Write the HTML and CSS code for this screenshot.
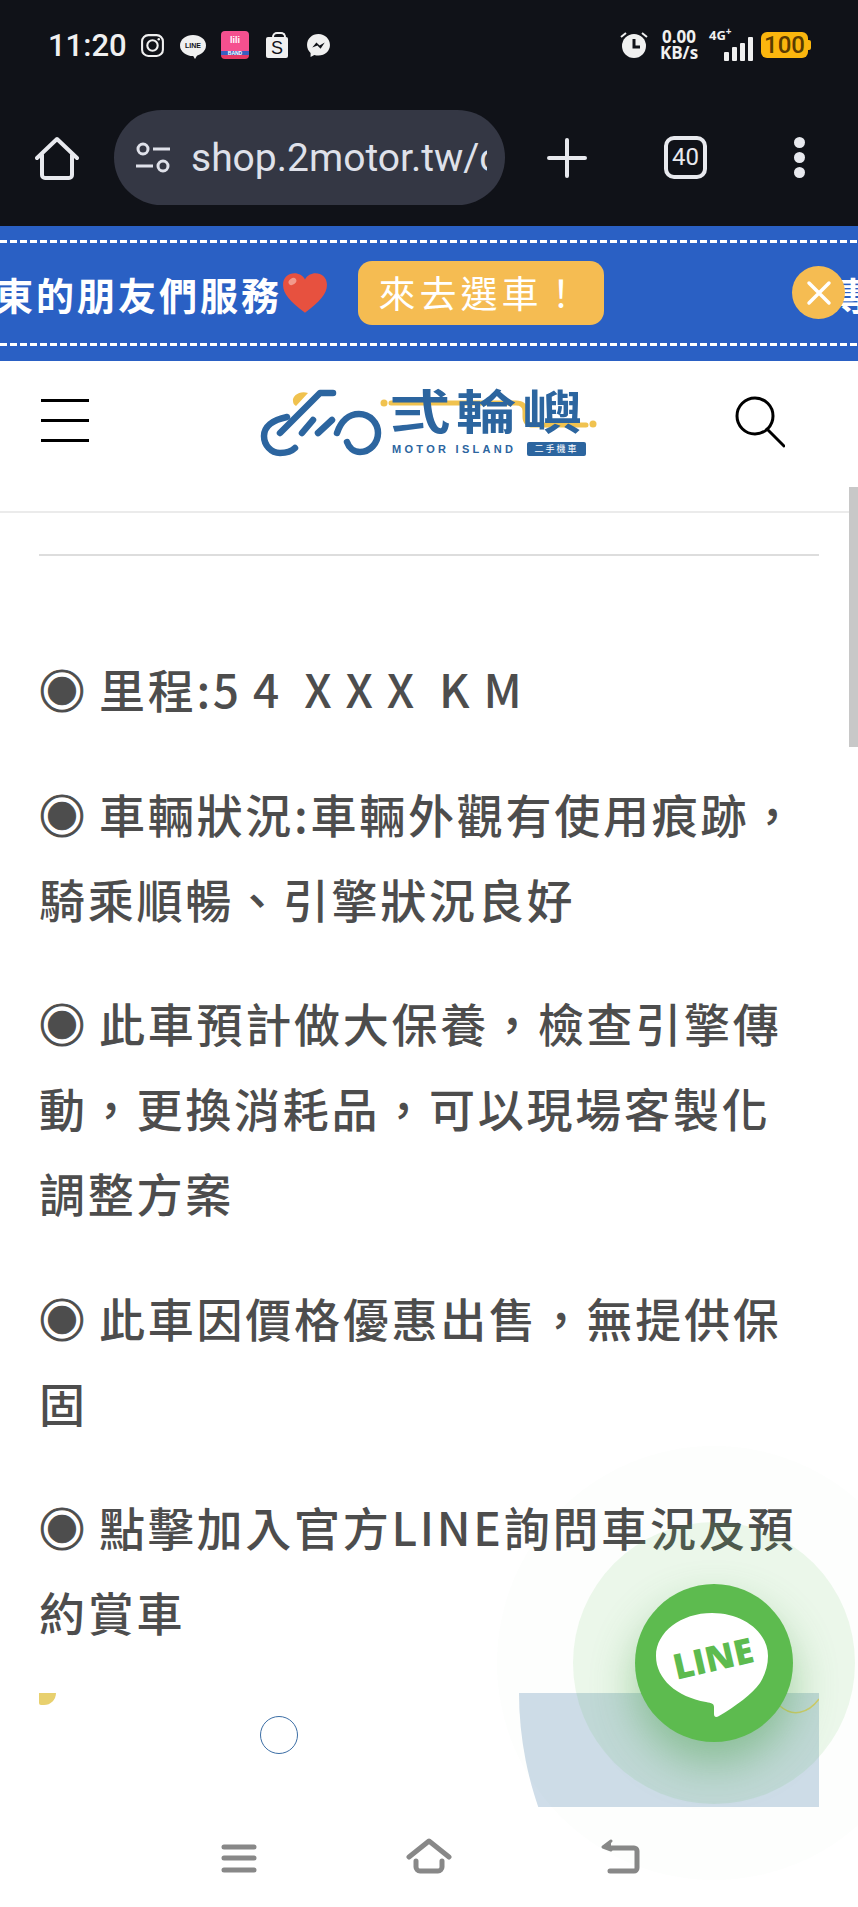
FILE: index.html
```html
<!DOCTYPE html>
<html lang="zh-Hant">
<head>
    <meta charset="UTF-8">
    <title>二輪嶼 Motor Island</title>
    <link rel="stylesheet" href="styles.css">
</head>
<body>

<div class="screen">
    <div class="top-dark">
        <div class="status-bar">
            <span class="clock">11:20</span>
            <svg class="st-icon ig" viewBox="0 0 24 24" fill="none" stroke="#f0f0f0" stroke-width="2"><rect x="2" y="2" width="20" height="20" rx="6"/><circle cx="12" cy="12" r="5"/><circle cx="18" cy="6" r="1.200" fill="#f0f0f0" stroke="none"/></svg>
            <span class="line-mini">LINE</span>
            <span class="app-pink"><span class="app-pink-top">lili</span><span class="app-pink-bot">BAND</span></span>
            <span class="shop-bag">S</span>
            <svg class="st-icon msg" viewBox="0 0 24 24"><path d="M12 1C5.700 1 1 5.500 1 11.500c0 3.100 1.300 5.800 3.400 7.600V23l3.600-2c1.200.4 2.600.6 4 .6 6.300 0 11-4.500 11-10.100S18.300 1 12 1z" fill="#f0f0f0"/><path d="M6 14l4-5 3 3 5-3-4 6-3-3z" fill="#101218"/></svg>

            <div class="status-right">
                <svg class="alarm" viewBox="0 0 28 28"><circle cx="14" cy="15" r="12" fill="#f0f0f0"/><path d="M14 8v8h6" fill="none" stroke="#101218" stroke-width="3"/><path d="M1 6l5-4M27 6l-5-4" stroke="#f0f0f0" stroke-width="2"/></svg>
                <div class="speed">0.00<br>KB/s</div>
                <div class="net">
                    <span class="net-type">4G<sup>+</sup></span>
                    <div class="bars">
                        <i class="bar b1"></i><i class="bar b2"></i><i class="bar b3"></i><i class="bar b4"></i>
                    </div>
                </div>
                <div class="battery">100</div>
            </div>
        </div>

        <div class="toolbar">
            <svg class="tb-home" viewBox="0 0 44 44" fill="none" stroke="#e8e9ee" stroke-width="4" stroke-linejoin="round" stroke-linecap="round"><path d="M2 22L22 3l20 19"/><path d="M7 19v20a3 3 0 0 0 3 3h24a3 3 0 0 0 3-3V19"/></svg>
            <div class="url-pill">
                <svg class="tune" viewBox="0 0 36 32" fill="none" stroke="#dfe1ea" stroke-width="3"><circle cx="8" cy="7" r="5"/><path d="M18 7h17M1 24h17"/><circle cx="28" cy="24" r="5"/></svg>
                <span class="url-text">shop.2motor.tw/c</span>
            </div>
            <svg class="tb-plus" viewBox="0 0 40 40" stroke="#e8e9ee" stroke-width="4" stroke-linecap="round"><path d="M20 2v36M2 20h36"/></svg>
            <div class="tab-count">40</div>
            <div class="tb-dots"><i></i><i></i><i></i></div>
        </div>
    </div>

    <div class="banner">
        <div class="dash"></div>
        <div class="banner-row">
            <span class="banner-text">東的朋友們服務</span>
            <svg class="heart" viewBox="0 0 44 40"><path d="M22 39C8 28 1 21 1 12 1 5 6 1 12 1c4 0 8 2 10 6 2-4 6-6 10-6 6 0 11 4 11 11 0 9-7 16-21 27z" fill="#e7513f"/><ellipse cx="10" cy="9" rx="4" ry="3" fill="#f29a8c" transform="rotate(-35 10 9)"/></svg>
            <span class="banner-btn">來去選車！</span>
            <span class="banner-text next">專</span>
        </div>
        <div class="dash"></div>
        <span class="banner-close">
            <svg viewBox="0 0 26 26" stroke="#fff" stroke-width="3.500" stroke-linecap="round"><path d="M3 3l20 20M23 3L3 23"/></svg>
        </span>
    </div>

    <div class="site-header">
        <div class="burger"><i></i><i></i><i></i></div>
        <div class="logo">
            <svg class="logo-art" viewBox="0 0 340 75" fill="none">
                <path d="M50 6C42 3 34 9 35 14c0 2 1 4 3 5z" fill="#f0c24f"/>
                <path d="M37 61c-4 4-9 5-15 5C13 66 6 58 6 49c0-9 8-16 23-19" stroke="#2c659f" stroke-width="6.500" stroke-linecap="round"/>
                <path d="M22 46L62 6h13" stroke="#2c659f" stroke-width="6.500" stroke-linecap="round" stroke-linejoin="round"/>
                <path d="M44 46l11-13M60 46l14-13" stroke="#2c659f" stroke-width="6.500" stroke-linecap="round"/>
                <path d="M79 46c4-12 12-19 22-19 11 0 19 9 19 19s-8 19-18 19c-6 0-11-4-13-10" stroke="#2c659f" stroke-width="6.500" stroke-linecap="round"/>
                <circle cx="126" cy="16" r="3.500" fill="#f0c24f"/>
                <path d="M133 16h125c6 0 9 3 9 8v6c0 5 3 8 8 8h53" stroke="#f0c24f" stroke-width="5" stroke-linecap="round"/>
                <circle cx="335" cy="37" r="3.500" fill="#f0c24f"/>
            </svg>
            <span class="logo-name">弍輪嶼</span>
            <span class="logo-en">MOTOR ISLAND</span>
            <span class="logo-badge">二手機車</span>
        </div>
        <svg class="search" viewBox="0 0 50 52" fill="none" stroke="#000" stroke-width="3"><circle cx="20" cy="20" r="18"/><path d="M32 33l17 17" stroke-linecap="round"/></svg>
    </div>

    <div class="content">
        <hr class="rule">
        <p class="spec"><span class="mark">◉</span> 里程:5 4 &nbsp;X X X &nbsp;K M</p>
        <p class="spec"><span class="mark">◉</span> 車輛狀況:車輛外觀有使用痕跡，騎乘順暢、引擎狀況良好</p>
        <p class="spec"><span class="mark">◉</span> 此車預計做大保養，檢查引擎傳動，更換消耗品，可以現場客製化調整方案</p>
        <p class="spec"><span class="mark">◉</span> 此車因價格優惠出售，無提供保固</p>
        <p class="spec"><span class="mark">◉</span> 點擊加入官方LINE詢問車況及預約賞車</p>

        <div class="promo">
            <span class="promo-dot"></span>
            <span class="promo-ring"></span>
            <div class="promo-shape">
                <svg class="promo-arc" viewBox="0 0 40 17" fill="none" stroke="#e3cf6c" stroke-width="1.500"><path d="M1 9c12 11 28 8 39-7"/></svg>
            </div>
        </div>
    </div>

    <div class="nav-bar">
        <svg class="nav-icon" width="36" height="30" viewBox="0 0 36 30" stroke="#888" stroke-width="5" stroke-linecap="round"><path d="M3 4h30M3 15h30M3 27h30"/></svg>
        <svg class="nav-icon" width="46" height="36" viewBox="0 0 46 36" fill="none" stroke="#888" stroke-width="5" stroke-linecap="round" stroke-linejoin="round"><path d="M3 19L23 3l20 16"/><path d="M10 23v6a4 4 0 0 0 4 4h18a4 4 0 0 0 4-4v-6"/></svg>
        <svg class="nav-icon" width="40" height="36" viewBox="0 0 40 36" fill="none" stroke="#888" stroke-width="5" stroke-linecap="round" stroke-linejoin="round"><path d="M10 10h24a3 3 0 0 1 3 3v17a3 3 0 0 1-3 3H10"/><path d="M11 3L3 9l8 3" fill="#888" stroke-width="3"/></svg>
    </div>

    <div class="scroll-thumb"></div>

    <div class="line-float">
        <div class="line-disc">
            <svg class="line-bubble" viewBox="0 0 112 106"><path d="M56 1C25 1 0 20 0 44c0 23 21 41 50 46 6 1 8 2 8 5v7c0 3 2 4 5 2 17-10 33-22 41-33 5-8 8-17 8-27C112 20 87 1 56 1z" fill="#fff"/></svg>
            <span class="line-word">LINE</span>
        </div>
    </div>
</div>

</body>
</html>
```

FILE: styles.css
```css
* {
    box-sizing: border-box;
}

body {
    margin: 0;
    background: #fff;
    font-family: "Noto Sans CJK TC", "Noto Sans", sans-serif;
}

.screen {
    position: relative;
    width: 858px;
    height: 1907px;
    overflow: hidden;
    display: flex;
    flex-direction: column;
}

/* Barra de estado y navegador */
.top-dark {
    height: 226px;
    background: #101218;
    color: #f0f0f0;
}

.status-bar {
    height: 90px;
    padding: 0 50px 0 48px;
    display: flex;
    align-items: center;
}

.clock {
    font-family: Roboto, sans-serif;
    font-size: 31px;
    font-weight: 500;
    width: 92px;
}

.st-icon {
    display: block;
}

.ig {
    width: 25px;
    height: 25px;
}

.line-mini {
    position: relative;
    width: 26px;
    height: 21px;
    margin-left: 15px;
    background: #f0f0f0;
    border-radius: 50%;
    color: #101218;
    font: 700 7px/21px "Liberation Sans", sans-serif;
    text-align: center;
}

.line-mini::after {
    content: "";
    position: absolute;
    left: 12px;
    top: 19px;
    border-top: 5px solid #f0f0f0;
    border-left: 3px solid transparent;
    border-right: 3px solid transparent;
}

.app-pink {
    width: 28px;
    height: 28px;
    margin-left: 15px;
    border-radius: 4px;
    background: linear-gradient(#f5508f 0 70%, #3a5fc0 70% 85%, #e63a66 85%);
    color: #fff;
    font: 700 9px/13px "Liberation Sans", sans-serif;
    text-align: center;
    overflow: hidden;
    display: flex;
    flex-direction: column;
}

.app-pink-top {
    height: 18px;
    line-height: 18px;
}

.app-pink-bot {
    font-size: 5px;
    line-height: 8px;
}

.shop-bag {
    position: relative;
    width: 22px;
    height: 21px;
    margin-left: 17px;
    margin-top: 5px;
    background: #f0f0f0;
    color: #101218;
    border-radius: 2px;
    font: 400 18px/22px "Liberation Sans", sans-serif;
    text-align: center;
}

.shop-bag::before {
    content: "";
    position: absolute;
    left: 6px;
    top: -5px;
    width: 10px;
    height: 7px;
    border: 2px solid #f0f0f0;
    border-bottom: none;
    border-radius: 5px 5px 0 0;
}

.msg {
    width: 25px;
    height: 25px;
    margin-left: 18px;
}

.status-right {
    margin-left: auto;
    display: flex;
    align-items: center;
}

.alarm {
    width: 28px;
    height: 28px;
}

.speed {
    margin-left: 10px;
    width: 42px;
    font: 700 17px/16px "Open Sans", sans-serif;
    text-align: center;
}

.net {
    margin-left: 9px;
    width: 44px;
    height: 32px;
    position: relative;
}

.net-type {
    position: absolute;
    left: 0;
    top: -1px;
    font: 700 13px/14px "Open Sans", sans-serif;
}

.net-type sup {
    font-size: 10px;
    line-height: 0;
}

.bars {
    position: absolute;
    right: 0;
    bottom: 0;
    display: flex;
    align-items: flex-end;
    gap: 3px;
}

.bar {
    display: block;
    width: 5px;
    background: #f0f0f0;
    border-radius: 1px;
}

.b1 { height: 9px; }
.b2 { height: 14px; }
.b3 { height: 18px; }
.b4 { height: 24px; }

.battery {
    position: relative;
    margin-left: 8px;
    width: 47px;
    height: 26px;
    background: #fbb60e;
    border-radius: 6px;
    color: #5a3b00;
    font: 500 24px/26px Roboto, sans-serif;
    text-align: center;
}

.battery::after {
    content: "";
    position: absolute;
    right: -3px;
    top: 8px;
    width: 3px;
    height: 10px;
    background: #fbb60e;
    border-radius: 0 2px 2px 0;
}

.toolbar {
    height: 135px;
    padding: 20px 0;
    position: relative;
    display: flex;
    align-items: center;
}

.tb-home {
    width: 44px;
    height: 44px;
    margin-left: 35px;
}

.url-pill {
    width: 391px;
    height: 95px;
    margin-left: 35px;
    padding-left: 21px;
    background: #343744;
    border-radius: 48px;
    display: flex;
    align-items: center;
}

.tune {
    width: 36px;
    height: 32px;
    flex: none;
}

.url-text {
    width: 296px;
    margin-left: 20px;
    overflow: hidden;
    white-space: nowrap;
    color: #dfe1ea;
    font: 400 39px/50px Roboto, sans-serif;
}

.tb-plus {
    width: 40px;
    height: 40px;
    margin-left: 42px;
}

.tab-count {
    width: 43px;
    height: 43px;
    margin-left: 77px;
    border: 4px solid #e8e9ee;
    border-radius: 10px;
    color: #e8e9ee;
    font: 400 24px/35px Roboto, sans-serif;
    text-align: center;
}

.tb-dots {
    margin-left: 87px;
    display: flex;
    flex-direction: column;
    gap: 4px;
}

.tb-dots i {
    display: block;
    width: 11px;
    height: 11px;
    border-radius: 50%;
    background: #e8e9ee;
}

/* Franja azul */
.banner {
    position: relative;
    height: 135px;
    padding-top: 14px;
    background: #2a60c4;
    overflow: hidden;
}

.dash {
    height: 3px;
    background: repeating-linear-gradient(90deg, #fff 0 7px, transparent 7px 10px);
}

.banner-row {
    height: 100px;
    margin-left: -5px;
    display: flex;
    align-items: center;
    white-space: nowrap;
}

.banner-text {
    color: #fff;
    font-size: 38px;
    font-weight: 700;
    letter-spacing: 3px;
}

.banner-text.next {
    margin-left: 230px;
}

.heart {
    width: 46px;
    height: 42px;
    flex: none;
}

.banner-btn {
    width: 246px;
    height: 64px;
    margin-left: 30px;
    flex: none;
    background: #f5bc52;
    border-radius: 14px;
    color: #fff;
    font-size: 37px;
    line-height: 62px;
    letter-spacing: 4px;
    text-align: center;
}

.banner-close {
    position: absolute;
    left: 792px;
    top: 40px;
    width: 53px;
    height: 53px;
    border-radius: 50%;
    background: #f5bc52;
    display: flex;
    align-items: center;
    justify-content: center;
}

.banner-close svg {
    width: 26px;
    height: 26px;
}

/* Cabecera */
.site-header {
    height: 152px;
    flex: none;
    position: relative;
    border-bottom: 2px solid #ebebeb;
}

.burger {
    position: absolute;
    left: 41px;
    top: 38px;
    width: 48px;
    display: flex;
    flex-direction: column;
    gap: 17px;
}

.burger i {
    display: block;
    height: 3px;
    background: #000;
}

.logo {
    position: absolute;
    left: 258px;
    top: 26px;
    width: 340px;
    height: 75px;
}

.logo-art {
    position: absolute;
    left: 0;
    top: 0;
    width: 340px;
    height: 75px;
}

.logo-name {
    position: absolute;
    left: 132px;
    top: 1px;
    color: #2c659f;
    font-size: 60px;
    font-weight: 700;
    line-height: 52px;
    letter-spacing: 6px;
    white-space: nowrap;
    transform: scaleY(.78);
    transform-origin: top left;
}

.logo-en {
    position: absolute;
    left: 134px;
    top: 55px;
    color: #2c659f;
    font: 700 11px/14px "Liberation Sans", sans-serif;
    letter-spacing: 3.300px;
}

.logo-badge {
    position: absolute;
    left: 269px;
    top: 55px;
    width: 59px;
    height: 14px;
    background: #2c659f;
    border-radius: 2px;
    color: #fff;
    font-size: 9px;
    line-height: 14px;
    letter-spacing: 2px;
    text-align: center;
}

.search {
    position: absolute;
    left: 735px;
    top: 35px;
    width: 50px;
    height: 52px;
}

/* Contenido */
.content {
    flex: 1;
    overflow: hidden;
    padding: 41px 39px 0;
    color: #4d4d4d;
}

.rule {
    margin: 0 0 90px;
    border: none;
    border-top: 2px solid #ddd;
}

.spec {
    margin: 0 0 39.500px;
    font-size: 46px;
    font-weight: 500;
    line-height: 85px;
    letter-spacing: 0.06em;
    word-spacing: -2px;
}

.mark {
    display: inline-block;
    line-height: 1;
    -webkit-text-stroke: 1px #4d4d4d;
}

.promo {
    position: relative;
    height: 116px;
    margin-top: -1px;
}

.promo-dot {
    position: absolute;
    left: 0;
    top: 0;
    width: 17px;
    height: 12px;
    background: #e8d06e;
    border-radius: 0 0 12px 2px;
}

.promo-ring {
    position: absolute;
    left: 221px;
    top: 23px;
    width: 38px;
    height: 38px;
    border: 1.500px solid #3c6ea5;
    border-radius: 50%;
}

.promo-shape {
    position: absolute;
    right: 0;
    top: 0;
    width: 300px;
    height: 116px;
    background: #cfdde9;
    clip-path: ellipse(350px 350px at 350px 0);
}

.promo-arc {
    position: absolute;
    right: 0;
    top: 4px;
    width: 40px;
    height: 17px;
}

/* Barra inferior */
.nav-bar {
    height: 100px;
    flex: none;
    position: relative;
    background: #fff;
}

.nav-icon {
    position: absolute;
    top: 36px;
}

.nav-icon:nth-child(1) { left: 221px; top: 36px; }
.nav-icon:nth-child(2) { left: 406px; top: 31px; }
.nav-icon:nth-child(3) { left: 600px; top: 31px; }

.scroll-thumb {
    position: absolute;
    right: 0;
    top: 487px;
    width: 9px;
    height: 260px;
    background: #c8c8c8;
}

/* Boton flotante de LINE */
.line-float {
    position: absolute;
    left: 497px;
    top: 1446px;
    width: 434px;
    height: 434px;
    border-radius: 50%;
    background: rgba(93, 187, 79, 0.012);
    display: flex;
    align-items: center;
    justify-content: center;
}

.line-float::before {
    content: "";
    position: absolute;
    left: 76px;
    top: 76px;
    width: 282px;
    height: 282px;
    border-radius: 50%;
    background: rgba(93, 187, 79, 0.11);
}

.line-disc {
    position: relative;
    width: 158px;
    height: 158px;
    border-radius: 50%;
    background: #5dbb4f;
    box-shadow: 0 22px 44px rgba(70, 160, 70, 0.45);
}

.line-bubble {
    position: absolute;
    left: 21px;
    top: 28px;
    width: 112px;
    height: 106px;
}

.line-word {
    position: absolute;
    left: 33px;
    top: 54px;
    width: 90px;
    color: #5dbb4f;
    font: 800 35px/40px "Open Sans", sans-serif;
    text-align: center;
    transform: rotate(-13deg);
}
```
